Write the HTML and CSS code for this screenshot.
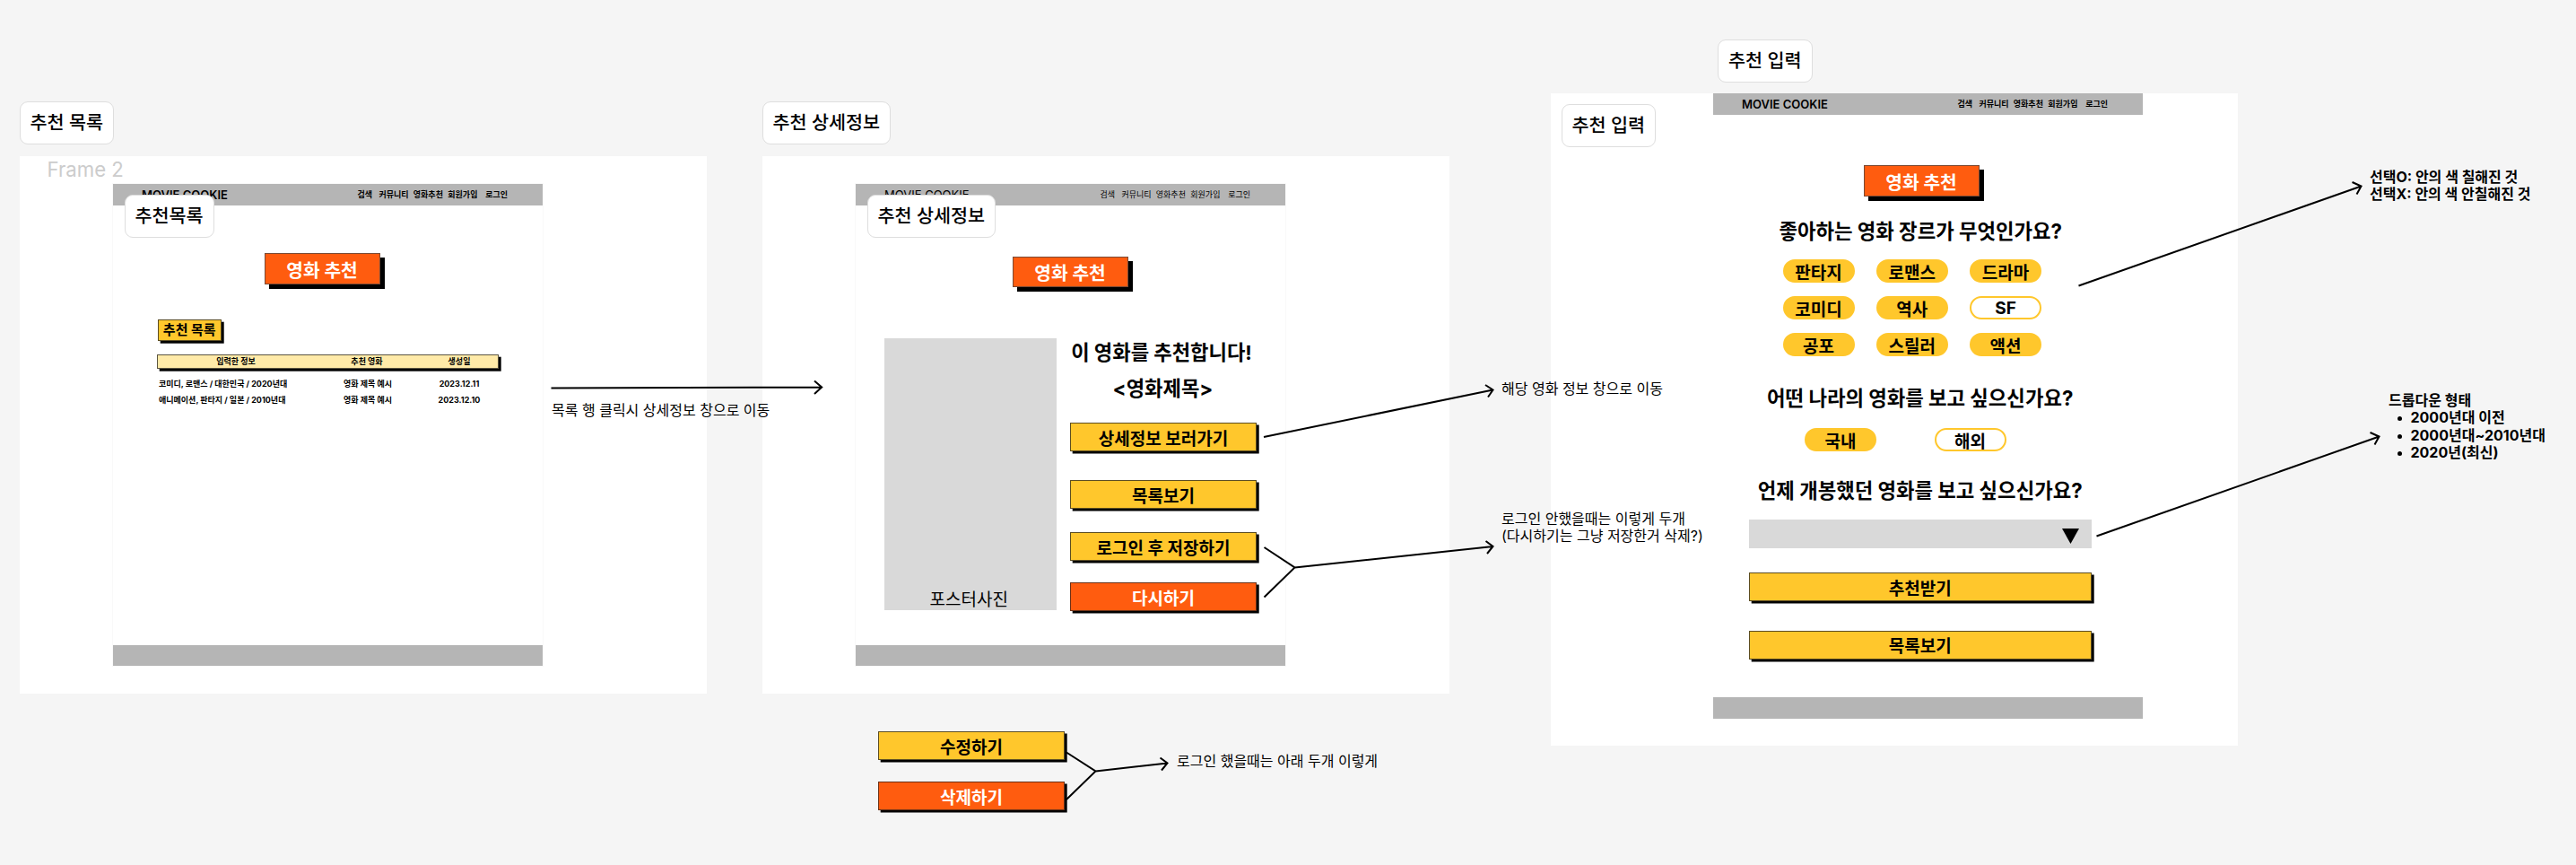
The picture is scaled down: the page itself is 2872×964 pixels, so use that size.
FILE: index.html
```html
<!DOCTYPE html>
<html lang="ko">
<head>
<meta charset="utf-8">
<title>MOVIE COOKIE</title>
<link rel="stylesheet" href="styles.css">
</head>
<body>
<main class="canvas">

  <section class="board board-list"></section>
  <section class="board board-detail"></section>
  <section class="board board-input"></section>

  <p class="frame-name">Frame 2</p>

  <article class="screen screen-list">
    <header class="bar bar-bold">
      <strong class="logo">MOVIE COOKIE</strong>
      <nav class="nav"><span>검색</span><span>커뮤니티</span><span>영화추천</span><span>회원가입</span><span>로그인</span></nav>
    </header>
    <div class="list-body">
      <h1 class="title">영화 추천</h1>
      <h2 class="chip">추천 목록</h2>
      <div class="table-head"><span>입력한 정보</span><span>추천 영화</span><span>생성일</span></div>
      <div class="table-row"><span>코미디, 로맨스 / 대한민국 / 2020년대</span><span>영화 제목 예시</span><span>2023.12.11</span></div>
      <div class="table-row"><span>애니메이션, 판타지 / 일본 / 2010년대</span><span>영화 제목 예시</span><span>2023.12.10</span></div>
    </div>
    <footer class="bar"></footer>
  </article>

  <article class="screen screen-detail">
    <header class="bar">
      <span class="logo">MOVIE COOKIE</span>
      <nav class="nav"><span>검색</span><span>커뮤니티</span><span>영화추천</span><span>회원가입</span><span>로그인</span></nav>
    </header>
    <div class="detail-body">
      <h1 class="title">영화 추천</h1>
      <div class="detail-columns">
        <div class="poster">포스터사진</div>
        <div class="detail-info">
          <h2 class="question">이 영화를 추천합니다!</h2>
          <h2 class="question movie-name">&lt;영화제목&gt;</h2>
          <div class="button gap-first">상세정보 보러가기</div>
          <div class="button gap-list">목록보기</div>
          <div class="button gap-save">로그인 후 저장하기</div>
          <div class="button button-orange">다시하기</div>
        </div>
      </div>
    </div>
    <footer class="bar"></footer>
  </article>

  <article class="screen screen-input">
    <header class="bar bar-bold">
      <strong class="logo">MOVIE COOKIE</strong>
      <nav class="nav"><span>검색</span><span>커뮤니티</span><span>영화추천</span><span>회원가입</span><span>로그인</span></nav>
    </header>
    <div class="input-body">
      <h1 class="title">영화 추천</h1>
      <h2 class="question q-genre">좋아하는 영화 장르가 무엇인가요?</h2>
      <div class="genres">
        <span class="pill">판타지</span><span class="pill">로맨스</span><span class="pill">드라마</span>
        <span class="pill">코미디</span><span class="pill">역사</span><span class="pill pill-off">SF</span>
        <span class="pill">공포</span><span class="pill">스릴러</span><span class="pill">액션</span>
      </div>
      <h2 class="question q-country">어떤 나라의 영화를 보고 싶으신가요?</h2>
      <div class="countries"><span class="pill">국내</span><span class="pill pill-off">해외</span></div>
      <h2 class="question q-year">언제 개봉했던 영화를 보고 싶으신가요?</h2>
      <div class="select"><svg width="19" height="17" viewBox="0 0 19 17"><path d="M0 0h19L9.500 17z"/></svg></div>
      <div class="button">추천받기</div>
      <div class="button">목록보기</div>
    </div>
    <footer class="bar"></footer>
  </article>

  <div class="signed-in">
    <div class="button">수정하기</div>
    <div class="button button-orange">삭제하기</div>
  </div>

  <div class="label label-list">추천 목록</div>
  <div class="label label-list-inner">추천목록</div>
  <div class="label label-detail">추천 상세정보</div>
  <div class="label label-detail-inner">추천 상세정보</div>
  <div class="label label-input">추천 입력</div>
  <div class="label label-input-inner">추천 입력</div>

  <p class="note note-row">목록 행 클릭시 상세정보 창으로 이동</p>
  <p class="note note-info">해당 영화 정보 창으로 이동</p>
  <p class="note note-guest">로그인 안했을때는 이렇게 두개<br>(다시하기는 그냥 저장한거 삭제?)</p>
  <p class="note note-member">로그인 했을때는 아래 두개 이렇게</p>
  <p class="note note-bold note-select">선택O: 안의 색 칠해진 것<br>선택X: 안의 색 안칠해진 것</p>
  <div class="note note-bold note-dropdown">드롭다운 형태
    <ul><li>2000년대 이전</li><li>2000년대~2010년대</li><li>2020년(최신)</li></ul>
  </div>

  <svg class="arrows" width="2872" height="964" viewBox="0 0 2872 964">
    <path d="M614.500 432.600L916 431.500M908 424.500L916.200 431.500L908 439"/>
    <path d="M1409 487L1664.500 434.500M1656 429L1664.500 434.500L1659 442.500"/>
    <path d="M1409.500 610L1443.500 632.500L1409.500 665.500M1443.500 632.500L1664.500 609M1656.500 603L1664.500 609L1658 617"/>
    <path d="M1189 838.500L1221.500 859.500L1189 891M1221.500 859.500L1301.500 850.500M1293.500 844.500L1301.500 850.500L1295 858.500"/>
    <path d="M2317.500 318.500L2632.500 207.500M2622.500 203L2632.500 207.500L2627.500 216.500"/>
    <path d="M2337.500 597.500L2652.500 486.500M2642.500 482L2652.500 486.500L2647.500 495.500"/>
  </svg>
</main>
</body>
</html>
```

FILE: styles.css
```css
* { box-sizing: border-box; }
body {
  margin: 0;
  background: #f5f5f5;
  color: #000;
  font-family: Inter, "Noto Sans CJK KR", sans-serif;
}
h1, h2, p, ul { margin: 0; padding: 0; font-weight: inherit; }
.canvas { position: relative; width: 2872px; height: 964px; overflow: hidden; white-space: nowrap; }

/* White boards behind the screens */
.board { position: absolute; background: #fff; width: 766px; }
.board-list { left: 22px; top: 173.500px; height: 599.500px; }
.board-detail { left: 850px; top: 173.500px; height: 599.500px; }
.board-input { left: 1729px; top: 104px; height: 727px; }
.frame-name { position: absolute; left: 52.500px; top: 175px; font-size: 22.200px; line-height: 28px; color: #ccc; }

/* Screens */
.screen { position: absolute; display: flex; flex-direction: column; justify-content: space-between; width: 479px; background: #fff; }
.screen-list { left: 126px; top: 205px; height: 537px; box-shadow: 0 0 0 1px #f9f9f9; }
.screen-detail { left: 954px; top: 205px; height: 537px; box-shadow: 0 0 0 1px #f9f9f9; }
.screen-input { left: 1910px; top: 104px; height: 697px; }
.bar { display: flex; align-items: center; justify-content: space-between; height: 23.500px; flex: none; background: #b5b5b5; padding: 0 31.500px 0 32px; }
.screen-input .bar { height: 24px; }
.logo { font-size: 13px; font-weight: 400; }
.nav { display: grid; grid-template-columns: 24px 38.300px 38.500px 42px 32.200px; font-size: 9px; line-height: 14px; }
.bar-bold .logo { font-weight: 600; }
.bar-bold .nav { font-weight: 700; }

.title {
  display: flex; align-items: center; justify-content: center;
  width: 129px; height: 35px; padding-right: 1px;
  background: #ff5c0f; border: 1px solid #7a4a35; box-shadow: 5px 5px 0 #000;
  color: #fff; font-size: 20.300px; font-weight: 700;
}
.question { font-size: 22.300px; line-height: 28px; font-weight: 700; text-align: center; }
.button {
  display: flex; align-items: center; justify-content: center;
  width: 100%; height: 32px; flex: none;
  background: #ffc72c; border: 1px solid #5c4d22; box-shadow: 2.700px 2.500px 0 #000;
  font-size: 19px; font-weight: 700;
}
.button-orange { background: #ff5c0f; border-color: #6b3218; color: #fff; }

/* List screen */
.list-body { flex: 1; padding: 53.500px 49px 0; }
.list-body .title { margin-left: 120px; }
.chip {
  width: 70.500px; height: 24px; margin: 39px 0 15px 1px;
  background: #ffc72c; border: 1px solid #5c4d22; box-shadow: 2.700px 2.700px 0 #000;
  font-size: 15px; line-height: 22px; font-weight: 700; text-align: center;
}
.table-head, .table-row { display: grid; font-size: 9px; font-weight: 700; text-align: center; }
.table-head { grid-template-columns: 174px 118px 88px; height: 16px; margin-bottom: 8px; line-height: 14px; background: #ffeaa8; border: 1px solid #5c5540; box-shadow: 2.700px 2.700px 0 #000; }
.table-row { grid-template-columns: 177px 116px 1fr; line-height: 17.500px; }
.table-row span:first-child { text-align: left; padding-left: 2px; }

/* Detail screen */
.detail-body { flex: 1; padding: 57.500px 32px 0; }
.detail-body .title { height: 34px; margin-left: 143px; }
.detail-columns { display: flex; gap: 15.500px; margin-top: 57px; }
.poster { display: flex; align-items: flex-end; justify-content: center; width: 191.500px; height: 303px; background: #d9d9d9; font-size: 19px; line-height: 23px; padding-right: 3px; }
.detail-info { display: flex; flex-direction: column; width: 208px; padding-top: 1.500px; }
.detail-info .question { margin-right: 4px; font-size: 22.200px; }
.detail-info .movie-name { margin: 12.500px 0 24px; margin-right: 1px; }
.gap-first { margin-bottom: 32px; }
.gap-list { margin-bottom: 26px; }
.gap-save { margin-bottom: 24px; }

/* Input screen */
.input-body { flex: 1; display: flex; flex-direction: column; padding: 56px 57px 0 39.500px; }
.input-body .title { margin-left: 128.500px; }
.q-genre { margin: 25px 0 17px; padding-left: 1px; }
.genres { display: grid; grid-template-columns: repeat(3, 80px); gap: 15px 24.300px; margin-left: 38px; }
.pill { display: flex; align-items: center; justify-content: center; width: 80px; height: 26px; border-radius: 13px; border: 2px solid #ffc72c; background: #ffc72c; font-size: 19px; font-weight: 700; }
.pill-off { background: #fff; }
.q-country { margin: 32.500px 0 19.500px; }
.countries { display: flex; gap: 64.500px; margin-left: 62.500px; }
.q-year { margin: 30px 0 17.500px; }
.select { display: flex; justify-content: flex-end; padding: 10.500px 14px 0 0; height: 32px; margin-bottom: 27.500px; background: #d9d9d9; }
.input-body .button { margin-bottom: 32.500px; }

.signed-in { position: absolute; left: 979px; top: 815px; width: 208px; display: grid; gap: 24px; }

/* Sticky labels */
.label { position: absolute; width: 105.500px; height: 47.500px; background: #fff; border: 1px solid #dedede; border-radius: 9px; font-size: 20.700px; line-height: 45px; font-weight: 500; text-align: center; }
.label-list { left: 21.500px; top: 113px; }
.label-list-inner { left: 138.500px; top: 217px; width: 100px; }
.label-detail { left: 849.500px; top: 113px; width: 143.500px; }
.label-detail-inner { left: 966.500px; top: 217px; width: 143.500px; }
.label-input { left: 1915px; top: 44px; }
.label-input-inner { left: 1740.500px; top: 116px; }

/* Annotations */
.note { position: absolute; font-size: 16px; line-height: 19.400px; }
.note-row { left: 615px; top: 448px; }
.note-info { left: 1674px; top: 424px; }
.note-guest { left: 1674px; top: 569px; }
.note-member { left: 1312px; top: 839px; }
.note-bold { font-weight: 700; }
.note-select { left: 2642px; top: 188px; }
.note-dropdown { left: 2663px; top: 437px; }
.note-dropdown ul { list-style: none; }
.note-dropdown li { display: flex; align-items: center; }
.note-dropdown li::before { content: ""; width: 5px; height: 5px; margin: 1px 10px 0 9.500px; border-radius: 50%; background: #000; }

.arrows { position: absolute; left: 0; top: 0; fill: none; stroke: #000; stroke-width: 2; }
```
